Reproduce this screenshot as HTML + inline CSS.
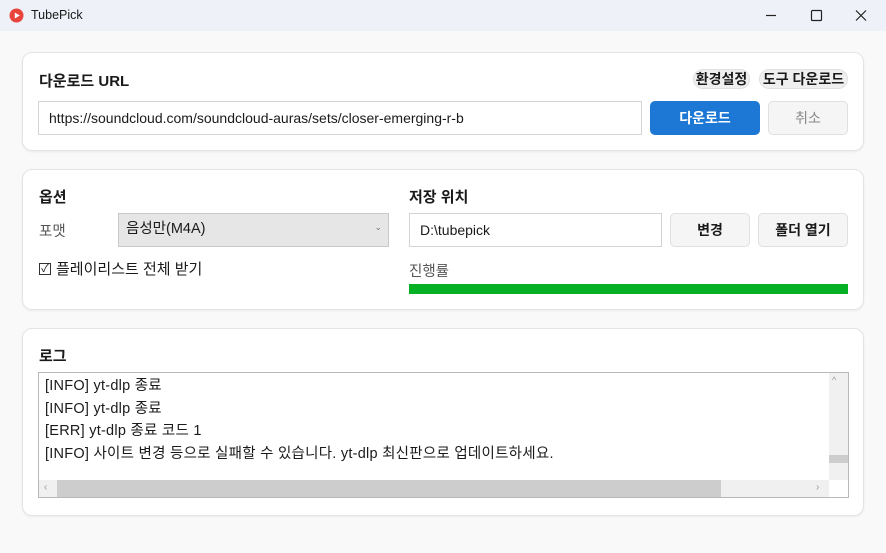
<!DOCTYPE html>
<html><head><meta charset="utf-8"><style>
*{box-sizing:border-box;margin:0;padding:0}
body{width:886px;height:553px;overflow:hidden;background:#f9f9f9;font-family:"Liberation Sans","Noto Sans CJK KR",sans-serif;color:#1a1a1a;position:relative;font-size:14px}
.abs{position:absolute}
.tb{left:0;top:0;width:886px;height:31px;background:#eff1f8}
.card{background:#fff;border:1px solid #e4e4e4;border-radius:10px;box-shadow:0 1px 2px rgba(0,0,0,.06)}
.h{font-size:15px;font-weight:bold}
.inp{background:#fff;border:1px solid #d4d4d4;font-size:14px;padding-left:10px;display:flex;align-items:center}
.btn{border:1px solid #e0e0e0;background:#f5f5f5;border-radius:5px;display:flex;align-items:center;justify-content:center;font-weight:bold;font-size:14px}
</style></head><body>
<div class="abs tb"></div>
<svg class="abs" style="left:9px;top:8px" width="15" height="15"><circle cx="7.5" cy="7.5" r="7" fill="#e8453c"/><path d="M5.8 4.5L10.8 7.5L5.8 10.5Z" fill="#fff"/></svg>
<div class="abs" style="left:31px;top:8px;font-size:12.5px">TubePick</div>
<svg class="abs" style="left:760px;top:8px" width="110" height="16"><path d="M6 7.5h10" stroke="#222" stroke-width="1.2"/><rect x="51.5" y="2.5" width="10" height="10" rx="1" fill="none" stroke="#222" stroke-width="1.2"/><path d="M96 2.5l10 10M106 2.5l-10 10" stroke="#222" stroke-width="1.2"/></svg>

<div class="abs card" style="left:22px;top:52px;width:842px;height:99px"></div>
<div class="abs h" style="left:39px;top:70px">다운로드 URL</div>
<div class="abs btn" style="left:693px;top:69px;width:57px;height:20px;border-radius:10px;background:#efefef;font-size:14px">환경설정</div>
<div class="abs btn" style="left:759px;top:69px;width:89px;height:20px;border-radius:10px;background:#efefef;font-size:14px">도구 다운로드</div>
<div class="abs inp" style="left:38px;top:101px;width:604px;height:34px">https://soundcloud.com/soundcloud-auras/sets/closer-emerging-r-b</div>
<div class="abs btn" style="left:650px;top:101px;width:110px;height:34px;background:#1c78d4;border-color:#1c78d4;color:#fff">다운로드</div>
<div class="abs btn" style="left:768px;top:101px;width:80px;height:34px;color:#888;font-weight:normal">취소</div>

<div class="abs card" style="left:22px;top:169px;width:842px;height:141px"></div>
<div class="abs h" style="left:39px;top:186px">옵션</div>
<div class="abs" style="left:39px;top:220px;color:#555;font-size:14.5px">포맷</div>
<div class="abs" style="left:118px;top:213px;width:271px;height:34px;background:#e6e6e6;border:1px solid #c8c8c8;padding:3px 0 0 7px;font-size:14.5px">음성만(M4A)<span style="position:absolute;right:6px;top:8px;font-size:9px;color:#777">⌄</span></div>
<div class="abs" style="left:39px;top:258px;display:flex;align-items:center;font-size:15px"><span style="width:12px;height:12px;border:1px solid #333;font-size:11px;line-height:10px;text-align:center;margin-right:5px">✓</span>플레이리스트 전체 받기</div>
<div class="abs h" style="left:409px;top:186px">저장 위치</div>
<div class="abs inp" style="left:409px;top:213px;width:253px;height:34px">D:\tubepick</div>
<div class="abs btn" style="left:670px;top:213px;width:80px;height:34px">변경</div>
<div class="abs btn" style="left:758px;top:213px;width:90px;height:34px">폴더 열기</div>
<div class="abs" style="left:409px;top:260px;color:#555;font-size:14.5px">진행률</div>
<div class="abs" style="left:409px;top:284px;width:439px;height:10px;background:#06b025"></div>

<div class="abs card" style="left:22px;top:328px;width:842px;height:188px"></div>
<div class="abs h" style="left:39px;top:345px">로그</div>
<div class="abs" style="left:38px;top:372px;width:811px;height:126px;border:1px solid #b8b8b8;background:#fff"></div>
<div class="abs" style="left:45px;top:375px;line-height:22.5px;font-size:14.5px;letter-spacing:.25px">[INFO] yt-dlp 종료<br>[INFO] yt-dlp 종료<br>[ERR] yt-dlp 종료 코드 1<br>[INFO] 사이트 변경 등으로 실패할 수 있습니다. yt-dlp 최신판으로 업데이트하세요.</div>
<div class="abs" style="left:829px;top:373px;width:19px;height:107px;background:#f0f0f0"></div>
<div class="abs" style="left:829px;top:455px;width:19px;height:8px;background:#cdcdcd"></div>
<div class="abs" style="left:39px;top:480px;width:790px;height:17px;background:#f0f0f0"></div>
<div class="abs" style="left:57px;top:480px;width:664px;height:17px;background:#cdcdcd"></div>
<div class="abs" style="left:832px;top:375px;font-size:9px;color:#999">^</div>
<div class="abs" style="left:44px;top:482px;font-size:10px;color:#999">‹</div>
<div class="abs" style="left:816px;top:482px;font-size:10px;color:#999">›</div>
</body></html>
